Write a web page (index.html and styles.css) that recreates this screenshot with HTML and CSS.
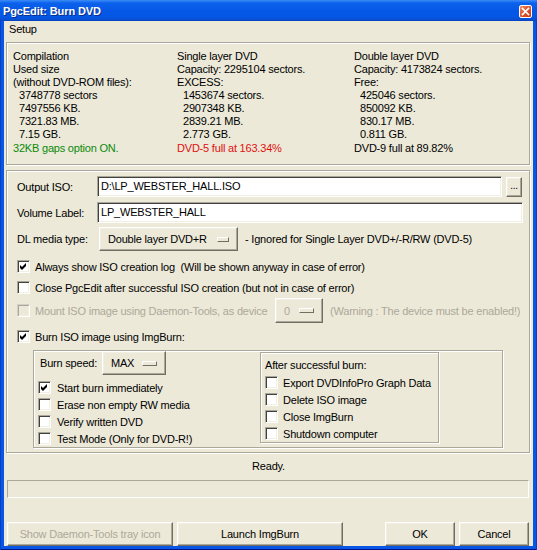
FILE: index.html
```html
<!DOCTYPE html>
<html>
<head>
<meta charset="utf-8">
<title>PgcEdit: Burn DVD</title>
<link rel="stylesheet" href="styles.css">
</head>
<body>
<div class="window">
  <div class="titlebar">
    <span class="title">PgcEdit: Burn DVD</span>
    <span class="close"><svg width="13" height="13" viewBox="0 0 13 13"><path d="M3.5 3.5 L9.5 9.5 M9.5 3.5 L3.5 9.5" stroke="#fff" stroke-width="1.7" stroke-linecap="square"/></svg></span>
  </div>
  <div class="client">
    <div class="menubar"><span class="menu">Setup</span></div>

    <div class="group info">
      <div class="col">
        <div>Compilation</div>
        <div>Used size</div>
        <div>(without DVD-ROM files):</div>
        <div class="ind">3748778 sectors</div>
        <div class="ind">7497556 KB.</div>
        <div class="ind">7321.83 MB.</div>
        <div class="ind">7.15 GB.</div>
        <div class="last green">32KB gaps option ON.</div>
      </div>
      <div class="col">
        <div>Single layer DVD</div>
        <div>Capacity: 2295104 sectors.</div>
        <div>EXCESS:</div>
        <div class="ind">1453674 sectors.</div>
        <div class="ind">2907348 KB.</div>
        <div class="ind">2839.21 MB.</div>
        <div class="ind">2.773 GB.</div>
        <div class="last red">DVD-5 full at 163.34%</div>
      </div>
      <div class="col">
        <div>Double layer DVD</div>
        <div>Capacity: 4173824 sectors.</div>
        <div>Free:</div>
        <div class="ind">425046 sectors.</div>
        <div class="ind">850092 KB.</div>
        <div class="ind">830.17 MB.</div>
        <div class="ind">0.811 GB.</div>
        <div class="last">DVD-9 full at 89.82%</div>
      </div>
    </div>

    <div class="group main">
      <div class="row r1">
        <span class="lbl">Output ISO:</span>
        <div class="entry out">D:\LP_WEBSTER_HALL.ISO</div>
        <div class="btn dots">...</div>
      </div>
      <div class="row r2">
        <span class="lbl">Volume Label:</span>
        <div class="entry vol">LP_WEBSTER_HALL</div>
      </div>
      <div class="row r3">
        <span class="lbl lbl-dl">DL media type:</span>
        <div class="btn opt dl"><span>Double layer DVD+R</span><span class="ind-bar"></span></div>
        <span class="note">- Ignored for Single Layer DVD+/-R/RW (DVD-5)</span>
      </div>
      <div class="row chk r4">
        <span class="cb"><svg width="11" height="11" viewBox="0 0 11 11"><polygon points="2,4 4,6 8,2 8,5 4,9 2,7" fill="#000"/></svg></span>
        <span>Always show ISO creation log&nbsp; (Will be shown anyway in case of error)</span>
      </div>
      <div class="row chk r5">
        <span class="cb"></span>
        <span>Close PgcEdit after successful ISO creation (but not in case of error)</span>
      </div>
      <div class="row r6 disabled">
        <span class="cb off"></span>
        <span class="mount-lbl">Mount ISO image using Daemon-Tools, as device</span>
        <div class="btn opt dev"><span>0</span><span class="ind-bar"></span></div>
        <span class="warn">(Warning : The device must be enabled!)</span>
      </div>
      <div class="row chk r7">
        <span class="cb"><svg width="11" height="11" viewBox="0 0 11 11"><polygon points="2,4 4,6 8,2 8,5 4,9 2,7" fill="#000"/></svg></span>
        <span>Burn ISO image using ImgBurn:</span>
      </div>

      <div class="group burn">
        <div class="burn-left">
          <div class="speed-row">
            <span class="speed-lbl">Burn speed:</span>
            <div class="btn opt speed"><span>MAX</span><span class="ind-bar"></span></div>
          </div>
          <div class="opts">
            <div class="row chk sub"><span class="cb"><svg width="11" height="11" viewBox="0 0 11 11"><polygon points="2,4 4,6 8,2 8,5 4,9 2,7" fill="#000"/></svg></span><span>Start burn immediately</span></div>
            <div class="row chk sub"><span class="cb"></span><span>Erase non empty RW media</span></div>
            <div class="row chk sub"><span class="cb"></span><span>Verify written DVD</span></div>
            <div class="row chk sub"><span class="cb"></span><span>Test Mode (Only for DVD-R!)</span></div>
          </div>
        </div>
        <div class="group after">
          <div class="after-title">After successful burn:</div>
          <div class="row chk sub2"><span class="cb"></span><span>Export DVDInfoPro Graph Data</span></div>
          <div class="row chk sub2"><span class="cb"></span><span>Delete ISO image</span></div>
          <div class="row chk sub2"><span class="cb"></span><span>Close ImgBurn</span></div>
          <div class="row chk sub2"><span class="cb"></span><span>Shutdown computer</span></div>
        </div>
      </div>
    </div>

    <div class="status">Ready.</div>
    <div class="progress"></div>

    <div class="buttons">
      <div class="btn big disabled-btn">Show Daemon-Tools tray icon</div>
      <div class="btn big launch">Launch ImgBurn</div>
      <div class="btn small ok">OK</div>
      <div class="btn small cancel">Cancel</div>
    </div>
  </div>
</div>
</body>
</html>
```

FILE: styles.css
```css
* { box-sizing: border-box; }
html, body { margin: 0; padding: 0; }
body {
  width: 537px;
  height: 550px;
  overflow: hidden;
  font-family: "Liberation Sans", Arial, sans-serif;
  font-size: 11px;
  letter-spacing: -0.2px;
  color: #000;
  background: #0054E3;
}

.window {
  width: 537px;
  height: 550px;
  background: #0756E4;
  box-shadow: inset 1px 0 #0A3FC0, inset -1px 0 #0A3FC0, inset 0 -1px #00138C;
  display: flex;
  flex-direction: column;
}

.titlebar {
  height: 21px;
  flex-shrink: 0;
  display: flex;
  align-items: center;
  background: linear-gradient(to bottom, #3D8DF6 0%, #0C62EC 14%, #0558E6 50%, #0456E4 80%, #0A50D6 92%, #0442B8 100%);
  color: #fff;
}
.title {
  padding-left: 3px;
  padding-top: 1px;
  font-weight: bold;
  font-size: 11px;
  letter-spacing: -0.1px;
  text-shadow: 1px 1px 0 #0A2E8A;
}
.close {
  margin-left: auto;
  margin-right: 5px;
  width: 13px;
  height: 13px;
  margin-top: 1px;
  border: 1px solid #fff;
  border-radius: 2px;
  background: linear-gradient(135deg, #F08E6E 0%, #E0572F 45%, #C83A14 100%);
  display: flex;
  align-items: center;
  justify-content: center;
}
.close svg { display: block; margin: -1px; }

.client {
  margin: 0 4px;
  height: 525px;
  background: #ECE9D8;
  display: flex;
  flex-direction: column;
}

.menubar {
  height: 17px;
  line-height: 17px;
  padding-left: 5px;
  flex-shrink: 0;
}

.group {
  border: 1px solid #ACA899;
  box-shadow: inset 1px 1px 0 #fff, 1px 1px 0 #fff;
}

.info {
  margin: 4px 3px 0 2px;
  height: 123px;
  padding: 7px 0 0 6px;
  display: grid;
  grid-template-columns: 164px 177px 1fr;
  line-height: 13px;
  flex-shrink: 0;
}
.info .ind { padding-left: 6px; }
.info .last { margin-top: 1px; }
.green { color: #0A8A0A; }
.red { color: #E01010; }

.main {
  margin: 5px 3px 0 2px;
  height: 283px;
  padding-left: 10px;
  flex-shrink: 0;
}

.row {
  display: flex;
  align-items: center;
  white-space: nowrap;
}
.r1 { margin-top: 5px; height: 21px; }
.r2 { margin-top: 5px; height: 21px; }
.r3 { margin-top: 4px; height: 24px; }
.r4 { margin-top: 7px; height: 17px; }
.r5 { margin-top: 4px; height: 17px; }
.r6 { margin-top: 2px; height: 25px; }
.r7 { margin-top: 5px; height: 17px; }

.lbl { width: 80px; flex-shrink: 0; }
.lbl-dl { width: 82px; }

.entry {
  height: 21px;
  background: #fff;
  border: 1px solid;
  border-color: #ACA899 #fff #fff #ACA899;
  box-shadow: inset 1px 1px 0 #404040, inset -1px -1px 0 #F1EFE2;
  padding: 0 0 0 3px;
  line-height: 19px;
}
.entry.out { width: 405px; }
.entry.vol { width: 426px; }

.btn {
  background: #ECE9D8;
  border: 1px solid;
  border-color: #fff #716F64 #716F64 #fff;
  box-shadow: inset -1px -1px 0 #ACA899, inset 1px 1px 0 #F1EFE2;
  display: flex;
  align-items: center;
  justify-content: center;
}
.dots {
  margin-left: 4px;
  width: 16px;
  height: 20px;
  font-size: 10px;
  padding-bottom: 2px;
}

.opt {
  justify-content: space-between;
  padding: 0 8px;
}
.ind-bar {
  width: 15px;
  height: 5px;
  border: 1px solid;
  border-color: #fff #716F64 #716F64 #fff;
  background: #ECE9D8;
}
.dl { width: 139px; height: 24px; }
.dl .ind-bar { margin-left: 10px; }
.note { margin-left: 7px; }

.cb {
  width: 13px;
  height: 13px;
  flex-shrink: 0;
  background: #fff;
  border: 1px solid;
  border-color: #ACA899 #fff #fff #ACA899;
  box-shadow: inset 1px 1px 0 #404040, inset -1px -1px 0 #F1EFE2;
  margin-right: 5px;
  display: block;
}
.cb svg { display: block; }
.cb.off {
  background: #ECE9D8;
  box-shadow: inset 1px 1px 0 #ACA899, inset -1px -1px 0 #F1EFE2;
  border-color: #D4D0C8 #fff #fff #D4D0C8;
}

.disabled { color: #ACA899; }
.mount-lbl { width: 240px; flex-shrink: 0; }
.dev { width: 48px; height: 25px; }
.warn { margin-left: 7px; }

.burn {
  margin-top: 5px;
  margin-left: 16px;
  width: 470px;
  height: 98px;
  display: flex;
  align-items: flex-start;
}
.burn-left { width: 226px; flex-shrink: 0; }
.speed-row {
  height: 24px;
  display: flex;
  align-items: center;
  padding-left: 6px;
}
.speed-lbl { width: 62px; }
.speed { width: 64px; height: 24px; }
.opts { margin-top: 4px; padding-left: 4px; }
.sub { height: 17px; }
.sub .cb { margin-right: 6px; }

.after {
  margin-top: 1px;
  width: 179px;
  height: 91px;
  padding: 4px 0 0 4px;
}
.after-title { height: 17px; line-height: 17px; }
.sub2 { height: 17px; }
.sub2 .cb { margin-right: 5px; }

.status {
  margin-top: 7px;
  height: 13px;
  line-height: 13px;
  text-align: center;
  flex-shrink: 0;
}
.progress {
  margin: 7px 4px 0 3px;
  height: 18px;
  flex-shrink: 0;
  border: 1px solid;
  border-color: #ACA899 #fff #fff #ACA899;
}

.buttons {
  margin-top: 24px;
  height: 24px;
  padding: 0 4px 0 3px;
  display: flex;
  flex-shrink: 0;
}
.big { width: 166px; height: 24px; }
.launch { margin-left: 4px; }
.disabled-btn { color: #ACA899; }
.small { width: 70px; height: 24px; }
.ok { margin-left: auto; }
.cancel { margin-left: 4px; }
```
